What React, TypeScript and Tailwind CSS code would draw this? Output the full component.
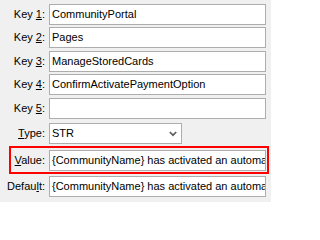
import React from "react";

function Label({ children, w }: { children: React.ReactNode; w: string }) {
  return <div className={`${w} shrink-0 text-right pr-[1px]`}>{children}</div>;
}

function Box({ text }: { text?: string }) {
  return (
    <div className="w-[217px] h-[21px] ml-[3px] bg-white border border-[#adadad] pl-[2px] flex items-center overflow-hidden whitespace-nowrap">
      {text}
    </div>
  );
}

export default function App() {
  const value = "{CommunityName} has activated an automatic payment option";
  return (
    <div className="w-[271px] h-[202px] bg-[#f0f0f0] pt-[4px] font-['Liberation_Sans',Arial,sans-serif] text-[11px] text-black leading-none">
      <div className="flex items-center">
        <Label w="w-[46px]">
          Key <span className="underline">1</span>:
        </Label>
        <Box text="CommunityPortal" />
      </div>
      <div className="flex items-center mt-[2px]">
        <Label w="w-[46px]">
          Key <span className="underline">2</span>:
        </Label>
        <Box text="Pages" />
      </div>
      <div className="flex items-center mt-[3px]">
        <Label w="w-[46px]">
          Key <span className="underline">3</span>:
        </Label>
        <Box text="ManageStoredCards" />
      </div>
      <div className="flex items-center mt-[2px]">
        <Label w="w-[46px]">
          Key <span className="underline">4</span>:
        </Label>
        <Box text="ConfirmActivatePaymentOption" />
      </div>
      <div className="flex items-center mt-[3px]">
        <Label w="w-[46px]">
          Key <span className="underline">5</span>:
        </Label>
        <Box />
      </div>
      <div className="flex items-center mt-[4px]">
        <Label w="w-[46px]">
          <span className="underline">T</span>ype:
        </Label>
        <div className="w-[133px] h-[21px] ml-[3px] bg-white border border-[#adadad] pl-[2px] flex items-center justify-between">
          <span>STR</span>
          <svg width="8" height="6" viewBox="0 0 8 6" className="mr-[4px]">
            <path d="M0.8 1 L4 4.2 L7.2 1" fill="none" stroke="#606060" strokeWidth="1.7" />
          </svg>
        </div>
      </div>
      <div className="ml-[9px] mt-[2px] w-[260px] h-[28px] border-2 border-[#ff0000] pt-[2px] flex items-start">
        <div className="flex items-center">
          <Label w="w-[35px]">
            <span className="underline">V</span>alue:
          </Label>
          <Box text={value} />
        </div>
      </div>
      <div className="flex items-center mt-[2px]">
        <Label w="w-[46px]">
          Defau<span className="underline">l</span>t:
        </Label>
        <Box text={value} />
      </div>
    </div>
  );
}
